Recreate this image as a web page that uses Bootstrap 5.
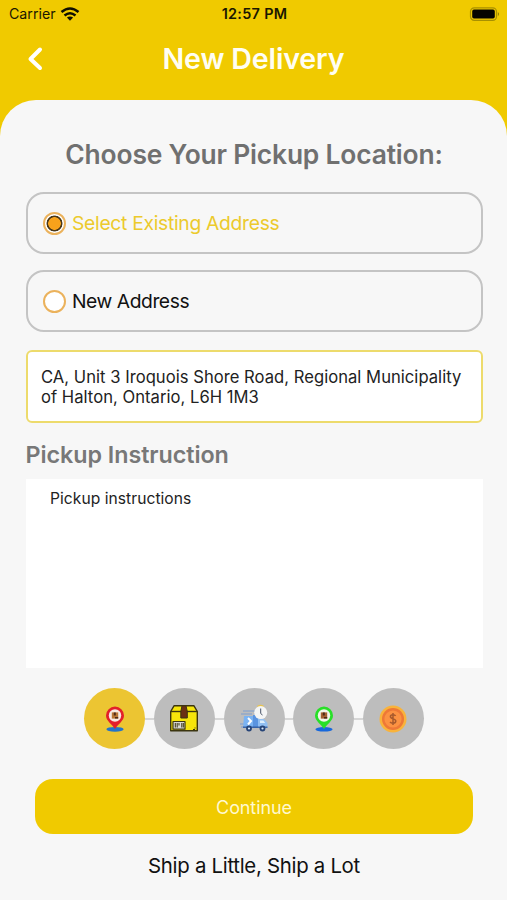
<!DOCTYPE html>
<html lang="en">
<head>
<meta charset="utf-8">
<meta name="viewport" content="width=device-width, initial-scale=1">
<title>New Delivery</title>
<link href="https://cdn.jsdelivr.net/npm/bootstrap@5.3.0/dist/css/bootstrap.min.css" rel="stylesheet">
<style>
  body { font-family: Inter, "Liberation Sans", sans-serif; background: #f0ca00; color: #111; }
  .screen { height: 900px; overflow: hidden; }
  .status-bar { height: 28px; padding: 0 7px 0 9px; font-size: 14.2px; line-height: 28px; color: #1a1700; }
  .status-side { flex: 1 1 0; }
  .clock { font-weight: 600; font-size: 14.4px; letter-spacing: .3px; }
  .app-bar { height: 72px; padding: 1px 27px 11px; }
  .app-bar h1 { font-size: 28.6px; font-weight: 600; line-height: 60px; letter-spacing: -.15px; color: #fffef2; }
  .bar-side { width: 18px; }
  .sheet { background: #f7f7f7; border-radius: 36px 36px 0 0; padding: 35px 24.5px 0 25.5px; }
  .sheet h2 { font-size: 26.4px; font-weight: 600; line-height: 38px; letter-spacing: -.18px; color: #707070; margin-bottom: 19px; }
  .choice { height: 62px; border: 2px solid #c4c4c4; border-radius: 18px; padding: 1px 0 0 15.5px; gap: 6px; font-size: 19.3px; letter-spacing: -.45px; margin-bottom: 16px; }
  .choice input { appearance: none; flex: none; width: 23px; height: 23px; margin: 0; border: 2px solid #ebb25c; border-radius: 50%; background: #fff; }
  .choice input:checked { background: radial-gradient(circle, #f7a21b 0 6px, #4a3717 6.6px 7.6px, #fff 8.3px) border-box; }
  .chosen { color: #ecca2c; letter-spacing: -.3px; }
  .address { height: 73px; border: 2px solid #eddb6c; border-radius: 6px; background: #fff; padding: 15px 13.5px; margin-top: 2px; font-size: 16.6px; letter-spacing: .03px; line-height: 20px; color: #222; white-space: nowrap; }
  .sheet h3 { font-size: 23.3px; font-weight: 600; line-height: 32px; letter-spacing: -.05px; color: #787878; margin: 16px 0 8px; }
  .notes { height: 189px; border: 0; border-radius: 0; resize: none; padding: 10px 24.5px; font-size: 15.6px; letter-spacing: .05px; line-height: 20px; }
  .notes::placeholder { color: #222; opacity: 1; }
  .steps { margin-top: 20px; }
  .step { width: 61px; height: 61px; flex: none; border-radius: 50%; background: #bdbdbd; }
  .step.current { background: #ecc532; }
  .link-line { width: 8.7px; height: 2px; background: #d6d6d6; }
  .btn-go, .btn-go:hover { height: 55px; margin: 30px 9.5px 0; background: #f0ca00; color: #fff9cf; border: 0; border-radius: 18px; font-size: 18px; letter-spacing: -.1px; padding-top: 7px; }
  .tagline { font-size: 20.4px; line-height: 28px; letter-spacing: -.29px; margin-top: 18px; }
</style>
</head>
<body>
<main class="screen d-flex flex-column">
  <div class="status-bar d-flex align-items-center">
    <div class="status-side d-flex align-items-center"><span>Carrier</span>
      <svg class="ms-1" width="20" height="15" viewBox="0 0 20 15" fill="none" stroke="#111000" stroke-width="2.5"><path d="M1.5 5Q10-2 18.500 5M4.500 8.500Q10 4 15.500 8.500"/><path d="M10 13.800 6.900 10.600Q10 8.300 13.100 10.600Z" fill="#111000" stroke="none"/></svg>
    </div>
    <div class="clock">12:57 PM</div>
    <div class="status-side d-flex justify-content-end">
      <svg width="31" height="15" viewBox="0 0 31 15"><rect x="1.500" y=".8" width="26" height="12.600" rx="3.800" fill="none" stroke="#a89000" stroke-width="1.200"/><rect x="3.200" y="2.600" width="22.600" height="9" rx="1.800" fill="#060500"/><path d="M28.900 5q2.200 2 0 4.200z" fill="#8f7a00"/></svg>
    </div>
  </div>
  <header class="app-bar d-flex align-items-center justify-content-between">
    <svg class="bar-side" height="26" viewBox="0 0 18 26" fill="none" stroke="#fff" stroke-width="4" stroke-linecap="round" stroke-linejoin="round"><path d="M13 3.500 3.500 13 13 22"/></svg>
    <h1 class="m-0">New Delivery</h1>
    <span class="bar-side"></span>
  </header>
  <section class="sheet flex-grow-1 d-flex flex-column">
    <h2 class="text-center text-nowrap">Choose Your Pickup Location:</h2>
    <label class="choice chosen d-flex align-items-center"><input type="radio" name="pickup" checked>Select Existing Address</label>
    <label class="choice d-flex align-items-center"><input type="radio" name="pickup">New Address</label>
    <div class="address">CA, Unit 3 Iroquois Shore Road, Regional Municipality<br>of Halton, Ontario, L6H 1M3</div>
    <h3>Pickup Instruction</h3>
    <textarea class="notes form-control" placeholder="Pickup instructions"></textarea>
    <div class="steps d-flex justify-content-center align-items-center">
      <div class="step current d-flex align-items-center justify-content-center">
        <svg width="30" height="30" viewBox="0 0 30 30"><ellipse cx="15" cy="25.3" rx="8.6" ry="2.4" fill="#2374c9"/><path d="M15 25C12 20 6 17 6 11.500a9 9 0 0 1 18 0C24 17 18 20 15 25Z" fill="#e3202a"/><circle cx="15" cy="11.500" r="6.200" fill="#f6e9e1"/><path d="M11.800 8.400h6.400v6.200h-6.400z" fill="#b87534"/><path d="M13.800 8.400h2v3h-2zM15 13h3.200v1.600H15z" fill="#4c2a18"/></svg>
      </div>
      <div class="link-line"></div>
      <div class="step d-flex align-items-center justify-content-center">
        <svg width="30" height="30" viewBox="0 0 30 30" stroke="#3b3510" stroke-width="1.400" stroke-linejoin="round"><path d="M1.700 7.500 5 1.800h20l3.300 5.700v19.300H1.700Z" fill="#f6e50b"/><path d="M1.700 7.500h26.600" /><path d="M11.800 7.500 13 1.800h4l1.300 5.700v6.500h-6.500z" fill="#6b3013" stroke-width="1"/><path d="M4 17.500h12v7.700H4z" fill="#d8d8d5" stroke-width="1.200"/><path d="M6.300 19v4.500M8.200 19v4.500M10 19v2.500M12.800 19v4.500M14.300 19v4.500M24 25.500h2M26 23.500v1" stroke-width="1"/></svg>
      </div>
      <div class="link-line"></div>
      <div class="step d-flex align-items-center justify-content-center">
        <svg width="30" height="30" viewBox="0 0 30 30"><path d="M4 7h12M2 10h11M5 13h6M1 20h5M2 23h4" stroke="#7c9dd0" stroke-width="1.200"/><path d="M5 12h13v12H4z" fill="#7bb3f2"/><path d="M14 11h6v13h-6z" fill="#5a94e0"/><path d="M19 15h6l3.500 4v5H19z" fill="#91bff2"/><path d="M21 16.500h3.300l2 2.500H21z" fill="#dceefd"/><path d="m9 14 3 3-3 3.500" fill="none" stroke="#fff" stroke-width="2"/><path d="M4 23.200h24.500" stroke="#315a9c" stroke-width="1.300"/><circle cx="10" cy="24.500" r="2.900" fill="#264477"/><circle cx="10" cy="24.500" r="1.100" fill="#d9e9fa"/><circle cx="23.500" cy="24.500" r="2.900" fill="#264477"/><circle cx="23.500" cy="24.500" r="1.100" fill="#d9e9fa"/><path d="M18.500 2.700q3-2 6 0" fill="none" stroke="#eac44c" stroke-width="1.800"/><circle cx="21.700" cy="8.600" r="6.500" fill="#f4f5f5"/><path d="M21.700 4.500v5l1.800 1.500" fill="none" stroke="#485368" stroke-width="1"/></svg>
      </div>
      <div class="link-line"></div>
      <div class="step d-flex align-items-center justify-content-center">
        <svg width="30" height="30" viewBox="0 0 30 30"><ellipse cx="15" cy="25.300" rx="8.600" ry="2.300" fill="#1768dc"/><path d="M15 25C12 20 6 17 6 11.500a9 9 0 0 1 18 0C24 17 18 20 15 25Z" fill="#28df28"/><circle cx="15" cy="11.500" r="6.200" fill="#f1f5e9"/><path d="M11.800 8.400h6.400v6.200h-6.400z" fill="#a55f31"/><path d="M13.800 8.400h2v3h-2zM15 13h3.200v1.600H15z" fill="#4c2a18"/></svg>
      </div>
      <div class="link-line"></div>
      <div class="step d-flex align-items-center justify-content-center">
        <svg width="30" height="30" viewBox="0 0 30 30"><circle cx="15" cy="15" r="13.500" fill="#f9b33b"/><circle cx="15" cy="15" r="11" fill="#ee7837"/><circle cx="15" cy="15" r="8.600" fill="#fc9242"/><path d="M17.600 11.900c-.5-.9-1.400-1.200-2.600-1.200-1.600 0-2.600.7-2.600 1.900 0 3 5.400 1.500 5.400 4.500 0 1.400-1.200 2.100-2.800 2.100-1.300 0-2.400-.5-2.900-1.400M15 9v12" fill="none" stroke="#a85a2c" stroke-width="1.500"/></svg>
      </div>
    </div>
    <button class="btn btn-go" type="button">Continue</button>
    <p class="tagline text-center mb-0">Ship a Little, Ship a Lot</p>
  </section>
</main>
<script src="https://cdn.jsdelivr.net/npm/bootstrap@5.3.0/dist/js/bootstrap.bundle.min.js"></script>
</body>
</html>
